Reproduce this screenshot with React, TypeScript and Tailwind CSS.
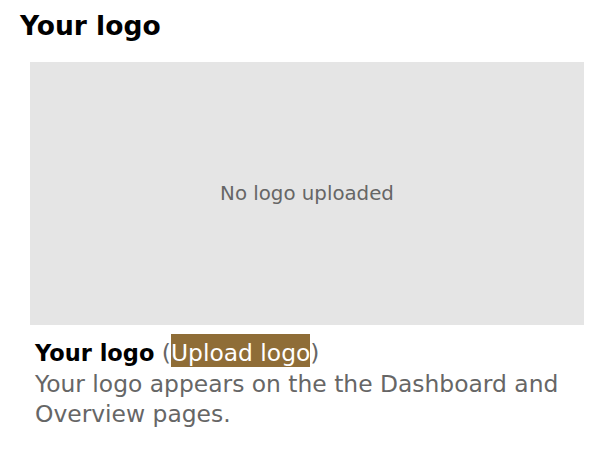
export default function App() {
  return (
    <div className="w-[590px] h-[474px] bg-white pt-[10px] pl-[20px] pr-[6px]" style={{ fontFamily: '"DejaVu Sans", sans-serif' }}>
      <h1 className="text-[26.5px] font-bold leading-[32px] text-black">Your logo</h1>
      <div className="mt-[20px] ml-[10px] h-[263px] bg-[#e5e5e5] flex items-center justify-center">
        <span className="text-[19.8px] text-[#666666]">No logo uploaded</span>
      </div>
      <div className="ml-[15px] mt-[13px] text-[23.4px] leading-[30.5px] text-[#666666]">
        <div>
          <span className="font-bold text-black text-[22.5px]">Your logo</span>{" "}
          <span>(</span>
          <span className="bg-[#8f6d37] text-white pt-[5px] pb-[0px]">Upload logo</span>
          <span>)</span>
        </div>
        <div>Your logo appears on the the Dashboard and Overview pages.</div>
      </div>
    </div>
  );
}
